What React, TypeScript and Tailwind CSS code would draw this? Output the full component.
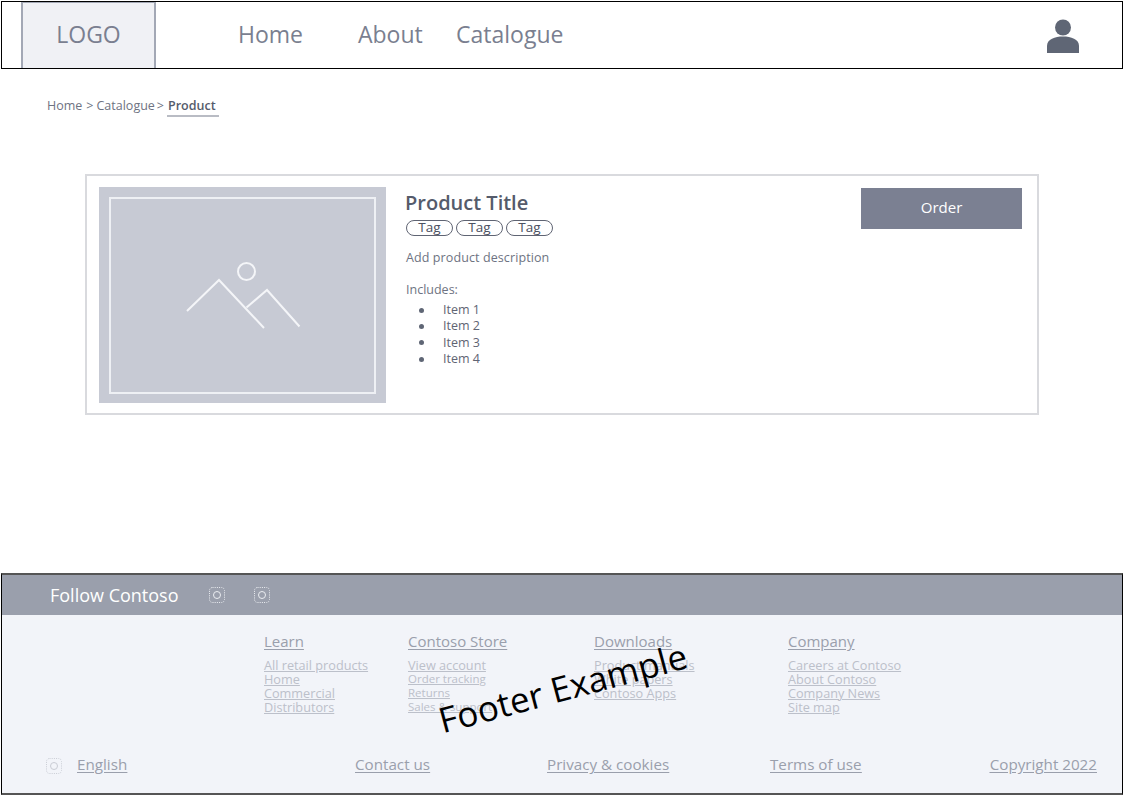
import React from "react";

const linkColumns = [
  { title: "Learn", width: "w-[144px]", links: ["All retail products", "Home", "Commercial", "Distributors"], small: [] as string[] },
  { title: "Contoso Store", width: "w-[186px]", links: ["View account", "Order tracking", "Returns", "Sales & support"], small: ["Order tracking", "Returns", "Sales & support"] },
  { title: "Downloads", width: "w-[194px]", links: ["Product manuals", "White papers", "Contoso Apps"], small: [] as string[] },
  { title: "Company", width: "w-[160px]", links: ["Careers at Contoso", "About Contoso", "Company News", "Site map"], small: [] as string[] },
];

function DottedIcon({ stroke }: { stroke: string }) {
  return (
    <svg width="16" height="16" viewBox="0 0 16 16" fill="none" className="shrink-0">
      <rect x="0.5" y="0.5" width="15" height="15" rx="3" stroke={stroke} strokeDasharray="1 1.2" />
      <circle cx="8" cy="8" r="3.5" stroke={stroke} />
    </svg>
  );
}

function Header() {
  return (
    <header className="mx-px mt-px flex h-[68px] shrink-0 items-center border border-black bg-white">
      <div className="ml-[19px] flex h-full w-[135px] items-center justify-center border-x-2 border-t border-[#a3a8b5] bg-[#f0f1f5] pb-[2px] text-[23px] text-[#7a7f90]">
        LOGO
      </div>
      <nav className="ml-[82px] flex text-[23px] leading-none text-[#7a7f90]">
        <a className="w-[120px] pb-[2px]">Home</a>
        <a className="w-[98px] pb-[2px]">About</a>
        <a>Catalogue</a>
      </nav>
      <svg width="32" height="34" viewBox="0 0 32 34" className="ml-auto mr-[43px] mt-px fill-[#5f6675]">
        <circle cx="16" cy="8.500" r="8" />
        <path d="M0 34V27C0 20 8 17.500 16 17.500C24 17.500 32 20 32 27V34Z" />
      </svg>
    </header>
  );
}

function Breadcrumb() {
  return (
    <div className="ml-[47px] mt-[28px] flex h-[20px] items-start text-[12.5px] leading-[18px] text-[#6e7382]">
      <span>Home</span>
      <span className="ml-[4px]">&gt;</span>
      <span className="ml-[3px]">Catalogue</span>
      <span className="ml-[2px]">&gt;</span>
      <span className="ml-[3px] h-[20px] w-[52px] border-b-2 border-[#b9bcc4] pl-px font-semibold text-[#555b6b]">Product</span>
    </div>
  );
}

function ProductCard() {
  return (
    <section className="ml-[85px] mt-[57px] flex h-[241px] w-[954px] border-2 border-[#d9dade] bg-white pl-[12px] pt-[11px]">
      <div className="h-[216px] w-[287px] shrink-0 bg-[#c7cad4] p-[10px]">
        <div className="flex h-[197px] w-[267px] items-center justify-center border-2 border-[#eef0f4]">
          <svg width="120" height="72" viewBox="0 0 120 72" fill="none" stroke="#f4f5f8" strokeWidth="2">
            <circle cx="63.500" cy="11.500" r="8.500" />
            <path d="M4 51L36 20L81 68" />
            <path d="M63.500 47.500L84 30L116.500 66.500" />
          </svg>
        </div>
      </div>
      <div className="ml-[20px] flex w-[455px] shrink-0 flex-col text-[#6e7382]">
        <h1 className="-ml-px mb-[4px] mt-[2px] text-[20px] font-semibold leading-[27px] text-[#555b6b]">Product Title</h1>
        <div className="flex gap-[3px]">
          {["Tag", "Tag", "Tag"].map((tag, i) => (
            <span
              key={i}
              className="flex h-[16px] w-[47px] items-center justify-center rounded-full border border-[#5f6473] text-[13.500px] leading-none text-[#4b5060]"
            >
              {tag}
            </span>
          ))}
        </div>
        <p className="mt-[13px] text-[12.5px] leading-[18px] tracking-[0.1px]">Add product description</p>
        <p className="mt-[14px] text-[12.5px] leading-[18px]">Includes:</p>
        <ul className="mt-[3px] text-[12.5px] leading-[16.300px] text-[#5f6473]">
          {["Item 1", "Item 2", "Item 3", "Item 4"].map((item) => (
            <li key={item} className="flex items-center">
              <span className="ml-[13px] h-[5px] w-[5px] rounded-full bg-[#5f6675]" />
              <span className="ml-[19px]">{item}</span>
            </li>
          ))}
        </ul>
      </div>
      <button className="mt-px h-[41px] w-[161px] shrink-0 bg-[#7b8092] pb-[2px] text-[15px] text-white">Order</button>
    </section>
  );
}

function Footer() {
  return (
    <footer className="relative mx-px mt-auto flex h-[222px] shrink-0 flex-col overflow-hidden border-y-2 border-x border-x-black border-y-[#555] bg-[#f2f4f9]">
      <div className="flex h-[40px] shrink-0 items-center bg-[#9a9fac] pl-[48px] text-white">
        <span className="w-[159px] text-[18px]">Follow Contoso</span>
        <DottedIcon stroke="#eceef2" />
        <span className="w-[29px]" />
        <DottedIcon stroke="#eceef2" />
      </div>

      <div className="ml-[262px] mt-[15px] flex">
        {linkColumns.map((col) => (
          <div key={col.title} className={col.width}>
            <h3 className="text-[15px] leading-[22px] text-[#9a9fac] underline underline-offset-2">{col.title}</h3>
            <ul className="mt-[6px] text-[12.700px] leading-[14px] text-[#bcc0ca] underline">
              {col.links.map((link) => (
                <li key={link} className={col.small.includes(link) ? "whitespace-nowrap text-[11.500px]" : "whitespace-nowrap"}>
                  {link}
                </li>
              ))}
            </ul>
          </div>
        ))}
      </div>

      <div className="mt-[39px] flex items-center pl-[44px] text-[15.200px] leading-[22px] text-[#9a9fac] underline underline-offset-2">
        <span className="mt-[4px] shrink-0">
          <DottedIcon stroke="#c9ccd4" />
        </span>
        <a className="ml-[15px] w-[278px]">English</a>
        <a className="w-[192px]">Contact us</a>
        <a className="w-[223px]">Privacy &amp; cookies</a>
        <a>Terms of use</a>
        <a className="ml-auto mr-[25px]">Copyright 2022</a>
      </div>

      {/* watermark laid across the link columns */}
      <span className="absolute left-[433px] top-[95px] -rotate-[15deg] whitespace-nowrap text-[35px] leading-none text-black">
        Footer Example
      </span>
    </footer>
  );
}

export default function App() {
  return (
    <div className="flex h-[795px] w-[1124px] flex-col overflow-hidden bg-white font-['Open_Sans',sans-serif]">
      <Header />
      <Breadcrumb />
      <ProductCard />
      <Footer />
    </div>
  );
}
